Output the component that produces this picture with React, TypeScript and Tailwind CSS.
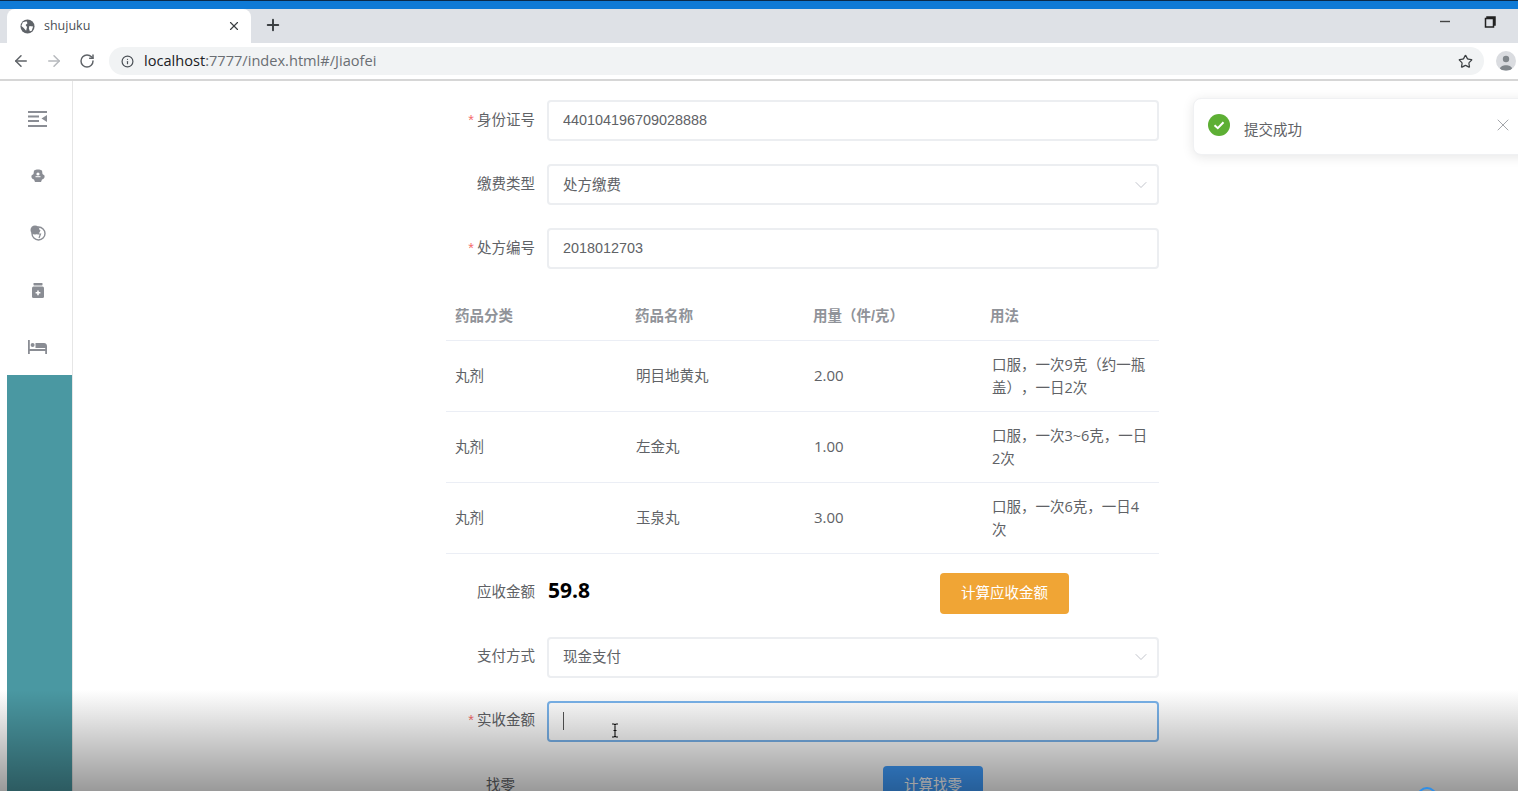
import { ArrowLeft, ArrowRight, ChevronDown, Info, Plus, RotateCw, Star, X } from "lucide-react"

const cjk = "font-['Liberation_Sans','Noto_Sans_CJK_SC',sans-serif]"
const yahei = "font-['Open_Sans','Noto_Sans_CJK_SC',sans-serif]"

const drugs = [
  { type: "丸剂", name: "明目地黄丸", amount: "2.00", usage: "口服，一次9克（约一瓶盖），一日2次" },
  { type: "丸剂", name: "左金丸", amount: "1.00", usage: "口服，一次3~6克，一日2次" },
  { type: "丸剂", name: "玉泉丸", amount: "3.00", usage: "口服，一次6克，一日4次" },
]

function BrowserChrome() {
  return (
    <header className="shrink-0">
      <div className="h-px bg-[#0b2a4a]" />
      <div className="h-2 bg-[#0f7ad6]" />
      {/* Tab strip */}
      <div className="flex h-[34px] items-end bg-[#dee1e6] pl-[7px]">
        <div className="flex h-[34px] w-[244px] items-center rounded-t-lg bg-white pl-[13px] pr-[10px]">
          <svg width="15" height="15" viewBox="0 0 16 16" className="shrink-0">
            <circle cx="8" cy="8" r="7.5" fill="#5f6368" />
            <path d="M3 3.5 L7 2.5 L8 4.5 L6 6.5 L7.5 8.5 L6.5 12.5 L4 9.5 L1.5 7.5 Z M10 7.5 L14 8 L12.5 12.5 L10.5 13 L9.5 10 Z" fill="#fff" />
          </svg>
          <span className={`ml-[9px] flex-1 text-[12.5px] text-[#4a4f55] ${yahei}`}>shujuku</span>
          <X size={14} strokeWidth={2} className="text-[#3c4043]" />
        </div>
        <div className="flex h-[34px] w-[44px] items-center justify-center">
          <Plus size={18} strokeWidth={2.6} className="-translate-y-px text-[#3c4043]" />
        </div>
        <div className="flex h-[34px] flex-1 items-start justify-end gap-[33px] pr-[22px] pt-[4px]">
          <svg width="12" height="18" viewBox="0 0 12 18">
            <path d="M1 8.5 H11" stroke="#444" strokeWidth="1.4" />
          </svg>
          <svg width="12" height="18" viewBox="0 0 12 18">
            <path d="M3 5.5 V4 H11 V12 H9.5 M1.5 5.5 H9.5 V14 H1.5 Z" stroke="#222" strokeWidth="1.5" fill="none" />
          </svg>
        </div>
      </div>
      {/* Address bar */}
      <div className="flex h-[38px] items-center border-b-2 border-[#d6d6d6] bg-white">
        <div className="flex w-[109px] items-center pl-[12px]">
          <ArrowLeft size={18} strokeWidth={2} className="text-[#5f6368]" />
          <ArrowRight size={18} strokeWidth={2} className="ml-[15px] text-[#b6b9bd]" />
          <RotateCw size={16} strokeWidth={2.2} className="ml-[16px] text-[#5f6368]" />
        </div>
        <div className="flex h-[28px] w-[1375px] items-center rounded-full bg-[#f1f3f4] pl-[12px] pr-[11px]">
          <Info size={13} strokeWidth={2.2} className="text-[#4a4f55]" />
          <span className={`ml-[10px] flex-1 text-[14.6px] text-[#6a6e73] ${yahei}`}>
            <span className="text-[#202124]">localhost</span>:7777/index.html#/Jiaofei
          </span>
          <Star size={15} strokeWidth={2} className="text-[#3c4043]" />
        </div>
        <div className="ml-[12px] flex h-[20px] w-[20px] items-end justify-center overflow-hidden rounded-full bg-[#dadce0]">
          <svg width="16" height="18" viewBox="0 0 16 18">
            <circle cx="8" cy="6" r="3.2" fill="#80868b" />
            <path d="M2 16 C2 11 14 11 14 16 C14 18 2 18 2 16 Z" fill="#80868b" />
          </svg>
        </div>
      </div>
    </header>
  )
}

function Sidebar() {
  return (
    <aside className="flex w-[73px] shrink-0 flex-col border-r border-[#e6e6e6] pl-[7px]">
      <div className="flex h-[294px] flex-col items-center pr-[4px] pt-[29px] text-[#8a8d94]">
        <svg width="20" height="18" viewBox="0 0 20 18" fill="currentColor">
          <rect x="0" y="1" width="19" height="2" />
          <rect x="0" y="5.5" width="11" height="2" />
          <rect x="0" y="10" width="11" height="2" />
          <rect x="0" y="15" width="19" height="2" />
          <path d="M19 5 V12 L13.5 8.5 Z" />
        </svg>
        <svg width="14" height="14" viewBox="0 0 14 14" fill="currentColor" className="mt-[41px]">
          <path d="M3 1.5 C5 0 9 0 11 1.5 L11.5 5 L13.5 6.5 C14 8.5 13 10 11 10.5 L10 13 H4 L3 10.5 C1 10 0 8.5 0.5 6.5 L2.5 5 Z" />
          <circle cx="7" cy="5" r="1.6" fill="#fff" />
          <rect x="4.5" y="7.2" width="5" height="1" fill="#fff" />
        </svg>
        <svg width="16" height="16" viewBox="0 0 16 16" className="mt-[42px]">
          <circle cx="8.5" cy="8.5" r="6.5" fill="none" stroke="currentColor" strokeWidth="1.4" />
          <circle cx="5" cy="5" r="4.5" fill="currentColor" />
          <path d="M10 5 L8 9 H10.5 L9 13" fill="none" stroke="currentColor" strokeWidth="1.2" />
        </svg>
        <svg width="12" height="15" viewBox="0 0 12 15" fill="currentColor" className="mt-[42px]">
          <rect x="1.5" y="0" width="9" height="2.4" rx="0.6" />
          <path d="M1.5 3.6 H10.5 Q12 3.6 12 5.2 V13.5 Q12 15 10.5 15 H1.5 Q0 15 0 13.5 V5.2 Q0 3.6 1.5 3.6 Z" />
          <path d="M5.2 7.4 H6.8 V9 H8.4 V10.6 H6.8 V12.2 H5.2 V10.6 H3.6 V9 H5.2 Z" fill="#fff" />
        </svg>
        <svg width="19" height="14" viewBox="0 0 19 14" fill="currentColor" className="mt-[42px]">
          <rect x="0" y="0" width="1.8" height="14" />
          <rect x="17.2" y="6" width="1.8" height="8" />
          <rect x="0" y="9" width="19" height="2" />
          <circle cx="4.6" cy="5" r="2" />
          <path d="M7.5 3 H16 Q19 3 19 6.5 V8 H7.5 Z" />
        </svg>
      </div>
      <div className="flex-1 bg-[#4a98a2]" />
    </aside>
  )
}

function FieldLabel({ children, required }: { children: string; required?: boolean }) {
  return (
    <label className="flex w-[89px] shrink-0 items-center justify-end text-[14.5px] text-[#606266]">
      {required && <span className="mr-[3px] text-[#f56c6c]">*</span>}
      {children}
    </label>
  )
}

function TextField({ label, value, required }: { label: string; value: string; required?: boolean }) {
  return (
    <div className="flex items-center gap-[12px]">
      <FieldLabel required={required}>{label}</FieldLabel>
      <input
        readOnly
        value={value}
        className="h-[41px] w-[612px] rounded-[4px] border-2 border-[#eceef1] bg-white px-[14px] pb-[2px] text-[14.4px] text-[#606266] outline-none"
      />
    </div>
  )
}

function SelectField({ label, value }: { label: string; value: string }) {
  return (
    <div className="flex items-center gap-[12px]">
      <FieldLabel>{label}</FieldLabel>
      <div className="flex h-[41px] w-[612px] items-center justify-between rounded-[4px] border-2 border-[#eceef1] bg-white pl-[14px] pr-[6px] text-[14.5px] text-[#606266]">
        <span className="pt-[2px]">{value}</span>
        <ChevronDown size={20} strokeWidth={1} className="text-[#b4b8c0]" />
      </div>
    </div>
  )
}

function DrugTable() {
  return (
    <table className="mt-[23px] w-[713px] table-fixed border-collapse text-[14.5px]">
      <thead>
        <tr className="h-[48px] border-b border-[#ebeef5] text-left font-bold text-[#909399]">
          <th className="w-[180px] pl-[9px] pt-[2px] font-bold">药品分类</th>
          <th className="w-[178px] pl-[9px] pt-[2px] font-bold">药品名称</th>
          <th className="w-[178px] pl-[9px] pt-[2px] font-bold">用量（件/克）</th>
          <th className="w-[177px] pl-[8px] pt-[2px] font-bold">用法</th>
        </tr>
      </thead>
      <tbody className={`text-[#606266] ${yahei}`}>
        {drugs.map((d) => (
          <tr key={d.name} className="h-[71px] border-b border-[#ebeef5]">
            <td className="pl-[9px]">{d.type}</td>
            <td className="pl-[10px]">{d.name}</td>
            <td className="pl-[10px] text-[15px]">{d.amount}</td>
            <td className="pl-[10px] pr-[10px] leading-[23px]">{d.usage}</td>
          </tr>
        ))}
      </tbody>
    </table>
  )
}

function PaymentForm() {
  return (
    <div className={`flex w-[713px] flex-col pt-[19px] ${cjk}`}>
      <div className="flex flex-col gap-[23px]">
        <TextField label="身份证号" value="440104196709028888" required />
        <SelectField label="缴费类型" value="处方缴费" />
        <TextField label="处方编号" value="2018012703" required />
      </div>
      <DrugTable />

      <div className="mt-[19px] flex h-[41px] items-center gap-[12px]">
        <FieldLabel>应收金额</FieldLabel>
        <span className="w-[381px] pb-[4px] pl-[1px] font-['Open_Sans',sans-serif] text-[21px] font-bold text-black">59.8</span>
        <button className="h-[41px] w-[129px] rounded-[4px] bg-[#f0a535] pt-[2px] text-[14.5px] text-white">计算应收金额</button>
      </div>

      <div className="mt-[23px]">
        <SelectField label="支付方式" value="现金支付" />
      </div>

      <div className="mt-[23px] flex items-center gap-[12px]">
        <FieldLabel required>实收金额</FieldLabel>
        <div className="flex h-[41px] w-[612px] items-center rounded-[4px] border-2 border-[#7ab4ec] bg-white pl-[14px]">
          <div className="h-[18px] w-px bg-[#555]" />
        </div>
      </div>

      <div className="mt-[24px] flex h-[41px] items-center">
        <label className="w-[69px] shrink-0 text-right text-[14.5px] text-[#606266]">找零</label>
        <button className="ml-[368px] h-[41px] w-[100px] rounded-[4px] bg-[#409eff] text-[14.5px] text-white">计算找零</button>
      </div>
    </div>
  )
}

export default function App() {
  return (
    <div className="relative flex h-[791px] w-[1518px] flex-col overflow-hidden bg-white [text-spacing-trim:space-all]">
      <BrowserChrome />
      <div className="flex flex-1">
        <Sidebar />
        <main className="ml-[373px] flex-1">
          <PaymentForm />
        </main>
      </div>

      {/* Success toast */}
      <div className={`absolute left-[1193px] top-[98px] flex h-[57px] w-[340px] rounded-l-lg border border-[#f0f1f3] bg-white shadow-[0_2px_12px_rgba(0,0,0,0.1)] ${cjk}`}>
        <svg width="22" height="22" viewBox="0 0 22 22" className="ml-[14px] mt-[15px]">
          <circle cx="11" cy="11" r="11" fill="#5daf34" />
          <path d="M6.5 11.2 L9.8 14.2 L15.5 8.2" stroke="#fff" strokeWidth="2" fill="none" />
        </svg>
        <span className="ml-[14px] mt-[21px] text-[14.5px] text-[#606266]">提交成功</span>
        <X size={20} strokeWidth={1} className="absolute left-[299px] top-[16px] text-[#909399]" />
      </div>

      {/* Mouse cursor */}
      <svg width="8" height="15" viewBox="0 0 8 15" className="absolute left-[611px] top-[723px]">
        <path d="M1 1 H3 L4 2 L5 1 H7 M4 2 V13 M1 14 H3 L4 13 L5 14 H7 M2.5 7.5 H5.5" stroke="#111" strokeWidth="1.1" fill="none" />
      </svg>

      {/* Video player fade at the bottom */}
      <div className="pointer-events-none absolute inset-x-0 bottom-0 h-[101px] bg-linear-to-b from-black/0 to-black/40" />

      {/* Spinner peeking in at the bottom edge */}
      <div className="absolute left-[1417px] top-[787px] h-[20px] w-[20px] rounded-full border-2 border-[#2f8fe8]" />
    </div>
  )
}
